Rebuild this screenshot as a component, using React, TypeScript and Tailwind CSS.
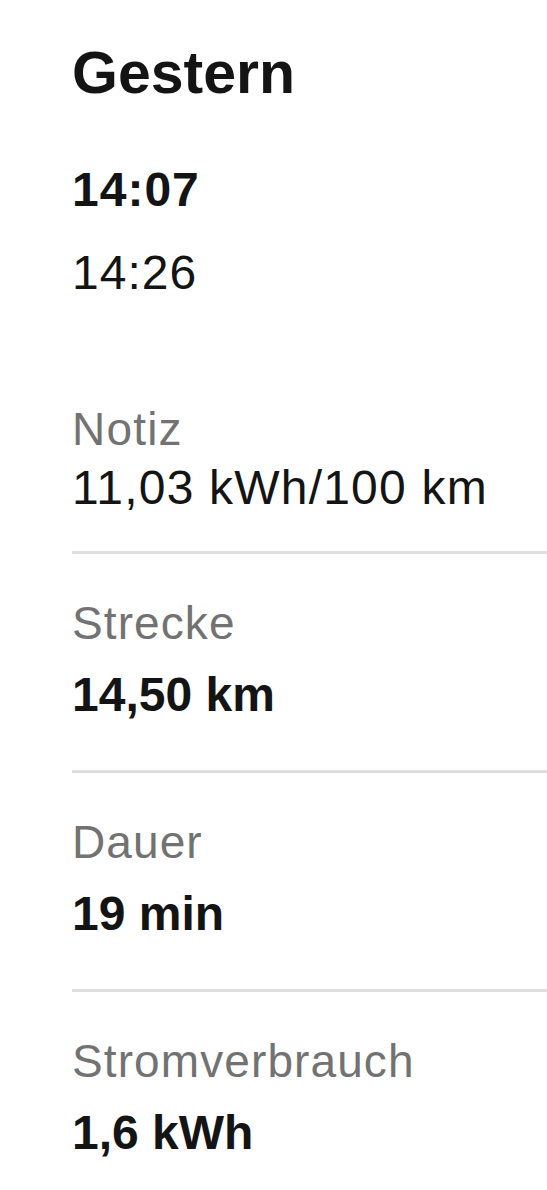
import React from 'react';

type Stat = { label: string; value: string };

const stats: Stat[] = [
  { label: 'Strecke', value: '14,50 km' },
  { label: 'Dauer', value: '19 min' },
  { label: 'Stromverbrauch', value: '1,6 kWh' },
];

function Divider() {
  return <div className="h-[3px] w-full bg-[#dedede]" />;
}

export default function App() {
  return (
    <div className="min-h-[1190px] bg-white pl-[72px] pt-[44px] text-[#141414] font-['Liberation_Sans',Arial,sans-serif]">
      {/* Header */}
      <h1 className="text-[59px] font-bold leading-none">Gestern</h1>

      {/* Trip times */}
      <div className="mt-[63px] flex flex-col gap-[35px]">
        <div className="text-[48px] font-bold leading-none tracking-[1px]">14:07</div>
        <div className="text-[48px] leading-none tracking-[1px]">14:26</div>
      </div>

      {/* Note */}
      <div className="mt-[109px] pb-[39px]">
        <div className="text-[46px] leading-none tracking-[1.2px] text-[#727272]">Notiz</div>
        <div className="mt-[12px] text-[48px] leading-none tracking-[1.2px]">11,03 kWh/100 km</div>
      </div>
      <Divider />

      {/* Trip stats */}
      {stats.map((s, i) => (
        <div key={s.label}>
          <div className="pt-[46px] pb-[51px]">
            <div className="text-[46px] leading-none tracking-[1.1px] text-[#727272]">{s.label}</div>
            <div className="mt-[25px] text-[48px] font-bold leading-none">{s.value}</div>
          </div>
          {i < stats.length - 1 && <Divider />}
        </div>
      ))}
    </div>
  );
}
